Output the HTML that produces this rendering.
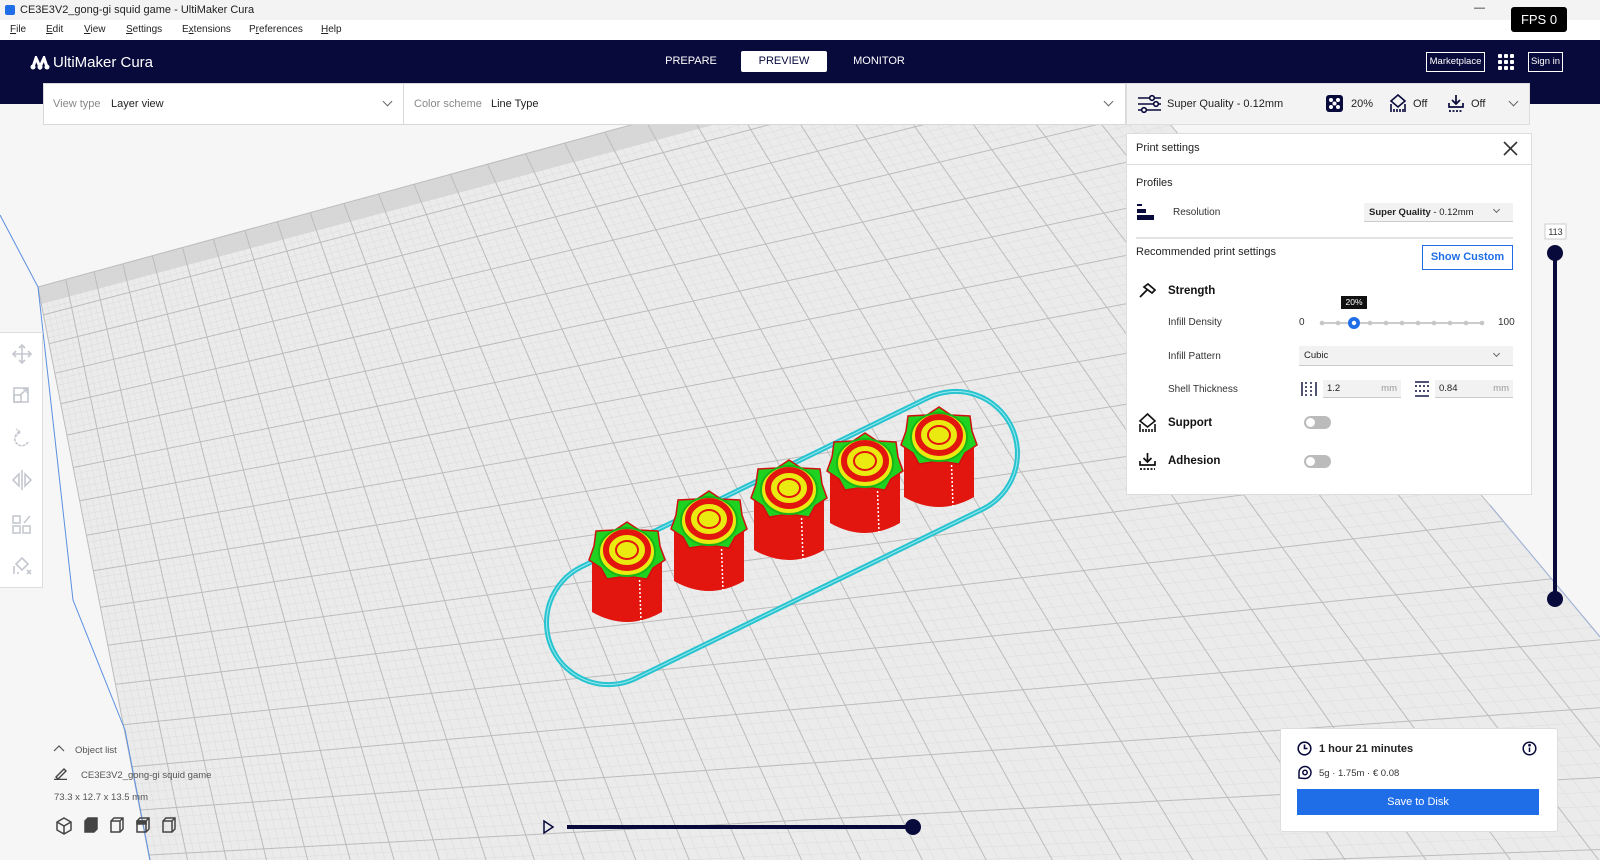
<!DOCTYPE html>
<html style="width:1600px;height:860px;overflow:hidden"><head><meta charset="utf-8"><style>
*{margin:0;padding:0;box-sizing:border-box}
html,body{overflow:hidden}
body{width:1600px;height:860px;overflow:hidden;background:#f6f6f6;font-family:"Liberation Sans",sans-serif;position:relative;color:#222}
.abs{position:absolute}
#title{left:0;top:0;width:1600px;height:20px;background:#f3f3f3;font-size:11px;line-height:20px}
#menu{left:0;top:20px;width:1600px;height:20px;background:#fff;font-size:10px;line-height:20px}
#menu span{position:absolute}
#nav{left:0;top:40px;width:1600px;height:64px;background:#080a3c}
.tab{position:absolute;top:51px;height:21px;font-size:11px;line-height:21px;color:#fff;text-align:center}
.box{background:#fff;border:1px solid #d8d8d8}
.lbl{color:#888;font-size:11px}
.dd{font-size:11px}
.chev{position:absolute;width:7px;height:7px;border-right:1.3px solid #666;border-bottom:1.3px solid #666;transform:rotate(45deg)}
.ps{font-size:10px;color:#333;position:absolute}
.bold{font-weight:bold;font-size:11.5px;color:#111;position:absolute}
.tog{position:absolute;width:27px;height:13px;border-radius:7px;background:#bbb}
.tog:after{content:"";position:absolute;left:2px;top:2px;width:9px;height:9px;border-radius:50%;background:#fff}
.inp{position:absolute;height:18px;background:#f2f2f2;border-bottom:1px solid #ccc;font-size:9.5px;line-height:18px;padding-left:4px}
.inp i{position:absolute;right:4px;color:#999;font-style:normal}
</style></head><body>
<svg id="scene" class="abs" style="left:0;top:0" width="1600" height="860">
<polygon id="plate" points="38,287 1070,5 1905,1000 177,1000" fill="#ebebeb"/>
<g id="grid"></g>
<polyline points="0,215 38,287 73,600 125,730 150,860" fill="none" stroke="#5b8fe0" stroke-width="1"/>
<line x1="1490" y1="505" x2="1600" y2="637" stroke="#9fb3da" stroke-width="1"/>
<g transform="translate(782,538) rotate(-26)">
<rect x="-255" y="-62" width="510" height="124" rx="62" fill="none" stroke="#27c3cf" stroke-width="5"/>
<rect x="-255" y="-62" width="510" height="124" rx="62" fill="none" stroke="#9ee9ef" stroke-width="1"/>
</g>
<defs>
<g id="knob">
<path d="M-35,0 L-35,60 Q0,80 35,60 L35,0 Z" fill="#e2150f"/>
<line x1="12" y1="12" x2="14" y2="70" stroke="#fff" stroke-width="1.5" stroke-dasharray="2 2"/>
<polygon points="0,-30 12,-22 31,-21 33,-6 38,8 26,16 20,27 0,24 -20,27 -26,16 -38,8 -33,-6 -31,-21 -12,-22" fill="#1fd21f" stroke="#d01010" stroke-width="1.5"/>
<ellipse cx="0" cy="0" rx="28" ry="24" fill="#eaea10" stroke="#17b517" stroke-width="2"/>
<ellipse cx="0" cy="-2" rx="21" ry="18" fill="none" stroke="#e2150f" stroke-width="6"/>
<ellipse cx="0" cy="-2" rx="11" ry="9" fill="#eaea10" stroke="#e2150f" stroke-width="2"/>
</g>
</defs>
<use href="#knob" x="627" y="552"/>
<use href="#knob" x="709" y="521"/>
<use href="#knob" x="789" y="490"/>
<use href="#knob" x="865" y="463"/>
<use href="#knob" x="939" y="437"/>
<line x1="1555" y1="253" x2="1555" y2="599" stroke="#080a3c" stroke-width="4"/>
<circle cx="1555" cy="253" r="8" fill="#080a3c"/>
<circle cx="1555" cy="599" r="8" fill="#080a3c"/>
<rect x="1545" y="224" width="21" height="15" fill="#fff" stroke="#ccc"/>
<text x="1555.5" y="235" font-size="9" text-anchor="middle" font-family="Liberation Sans" fill="#333">113</text>
<polygon points="544,821 553,827 544,833" fill="none" stroke="#080a3c" stroke-width="1.5"/>
<line x1="567" y1="827" x2="913" y2="827" stroke="#080a3c" stroke-width="4"/>
<circle cx="913" cy="827" r="8" fill="#080a3c"/>
</svg>
<script>
(function(){
var P=[[38,287],[1070,5],[1905,1000],[177,1000]];
var x0=P[0][0],y0=P[0][1],x1=P[1][0],y1=P[1][1],x2=P[2][0],y2=P[2][1],x3=P[3][0],y3=P[3][1];
var dx1=x1-x2,dx2=x3-x2,dy1=y1-y2,dy2=y3-y2,sx=x0-x1+x2-x3,sy=y0-y1+y2-y3,den=dx1*dy2-dx2*dy1;
var g=(sx*dy2-dx2*sy)/den,h=(dx1*sy-sx*dy1)/den;
var a=x1-x0+g*x1,b=x3-x0+h*x3,c=x0,d=y1-y0+g*y1,e=y3-y0+h*y3,f=y0;
function m(u,v){var w=g*u+h*v+1;return [(a*u+b*v+c)/w,(d*u+e*v+f)/w];}
var s='',NU=27,NV=19;
function L(p,q,col,sw){s+='<line x1="'+p[0].toFixed(1)+'" y1="'+p[1].toFixed(1)+'" x2="'+q[0].toFixed(1)+'" y2="'+q[1].toFixed(1)+'" stroke="'+col+'" stroke-width="'+sw+'"/>';}
for(var i=0;i<=NU*5;i++){var u=i/(NU*5);if(i%5)L(m(u,0),m(u,1),'#dedede',0.6);}
for(var j=0;j<=NV*5;j++){var v=j/(NV*5);if(j%5)L(m(0,v),m(1,v),'#dedede',0.6);}
var q=[m(0,0),m(1,0),m(1,0.032),m(0,0.032)];
s+='<polygon points="'+q.map(function(p){return p.join(',')}).join(' ')+'" fill="#d3d3d3" opacity="0.85"/>';
for(i=0;i<=NU;i++){u=i/NU;L(m(u,0),m(u,1),'#bcbcbc',1);}
for(j=0;j<=NV;j++){v=j/NV;L(m(0,v),m(1,v),'#bcbcbc',1);}
document.getElementById('grid').innerHTML=s;
})();
</script>

<div id="title" class="abs"><span style="position:absolute;left:5px;top:5px;width:10px;height:10px;background:#1f6ee8;border-radius:2px"></span><span style="position:absolute;left:20px">CE3E3V2_gong-gi squid game - UltiMaker Cura</span><span style="position:absolute;left:1474px;top:-2px">—</span></div>
<div id="menu" class="abs"><span style="left:10px"><u>F</u>ile</span><span style="left:46px"><u>E</u>dit</span><span style="left:84px"><u>V</u>iew</span><span style="left:126px"><u>S</u>ettings</span><span style="left:182px">E<u>x</u>tensions</span><span style="left:249px">P<u>r</u>eferences</span><span style="left:321px"><u>H</u>elp</span></div>
<div id="nav" class="abs"></div>
<div class="abs" style="left:1511px;top:7px;width:56px;height:25px;background:#000;border-radius:3px;color:#fff;font-size:13px;line-height:25px;text-align:center;z-index:10">FPS 0</div>
<div class="abs" style="left:30px;top:54px;color:#fff;font-size:15px;display:flex;align-items:center"><svg width="20" height="14" style="margin-right:3px"><circle cx="3" cy="11" r="2.5" fill="#fff"/><circle cx="10" cy="11" r="2.5" fill="#fff"/><circle cx="17" cy="11" r="2.5" fill="#fff"/><path d="M3,11 L6,2 L10,11 L14,2 L17,11" stroke="#fff" stroke-width="3" fill="none"/></svg>UltiMaker Cura</div>
<div class="tab" style="left:660px;width:62px">PREPARE</div>
<div class="tab" style="left:741px;width:86px;background:#fff;color:#080a3c;border-radius:2px">PREVIEW</div>
<div class="tab" style="left:848px;width:62px">MONITOR</div>
<div class="abs" style="left:1426px;top:52px;width:59px;height:20px;border:1px solid #fff;color:#fff;font-size:9.5px;line-height:18px;text-align:center">Marketplace</div>
<svg class="abs" style="left:1497px;top:53px" width="18" height="18"><g fill="#fff"><rect x="1" y="1" width="4" height="4" rx="1"/><rect x="7" y="1" width="4" height="4" rx="1"/><rect x="13" y="1" width="4" height="4" rx="1"/><rect x="1" y="7" width="4" height="4" rx="1"/><rect x="7" y="7" width="4" height="4" rx="1"/><rect x="13" y="7" width="4" height="4" rx="1"/><rect x="1" y="13" width="4" height="4" rx="1"/><rect x="7" y="13" width="4" height="4" rx="1"/><rect x="13" y="13" width="4" height="4" rx="1"/></g></svg>
<div class="abs" style="left:1528px;top:52px;width:35px;height:20px;border:1px solid #fff;color:#fff;font-size:9.5px;line-height:18px;text-align:center">Sign in</div>

<div class="abs box" style="left:43px;top:83px;width:361px;height:42px"></div>
<div class="abs box" style="left:403px;top:83px;width:723px;height:42px"></div>
<span class="abs lbl" style="left:53px;top:98px">View type</span><span class="abs dd" style="left:111px;top:98px">Layer view</span>
<div class="chev" style="left:384px;top:98px"></div>
<span class="abs lbl" style="left:414px;top:98px">Color scheme</span><span class="abs dd" style="left:491px;top:98px">Line Type</span>
<div class="chev" style="left:1105px;top:98px"></div>
<div class="abs" style="left:1126px;top:83px;width:404px;height:42px;background:#f3f3f3;border:1px solid #ddd"></div>
<svg class="abs" style="left:1138px;top:95px" width="24" height="18" stroke="#080a3c" stroke-width="1.6" fill="#fff"><line x1="0" y1="3" x2="23" y2="3"/><line x1="0" y1="9" x2="23" y2="9"/><line x1="0" y1="15" x2="23" y2="15"/><circle cx="14" cy="3" r="2.3"/><circle cx="18" cy="9" r="2.3"/><circle cx="6" cy="15" r="2.3"/></svg>
<span class="abs" style="left:1167px;top:98px;font-size:11px">Super Quality - 0.12mm</span>
<svg class="abs" style="left:1326px;top:95px" width="17" height="17"><rect width="17" height="17" rx="3" fill="#080a3c"/><g fill="#fff"><circle cx="5" cy="5" r="2"/><circle cx="12" cy="5" r="2"/><circle cx="8.5" cy="8.5" r="2"/><circle cx="5" cy="12" r="2"/><circle cx="12" cy="12" r="2"/></g></svg>
<span class="abs" style="left:1351px;top:98px;font-size:11px">20%</span>
<svg class="abs" style="left:1389px;top:94px" width="18" height="19" fill="none" stroke="#080a3c" stroke-width="1.6"><path d="M9,1 L16,7 L9,13 L2,7 Z"/><path d="M2,10 V18 M5,15 V18 M8,15 V18 M11,15 V18 M14,15 V18 M16,10 V18"/></svg>
<span class="abs" style="left:1413px;top:98px;font-size:11px">Off</span>
<svg class="abs" style="left:1447px;top:94px" width="18" height="19" fill="none" stroke="#080a3c" stroke-width="1.7"><path d="M9,1 V10 M5,6 L9,10 L13,6 M2,9 V13 H16 V9"/><path d="M2,17 H16" stroke-dasharray="2 1.5"/></svg>
<span class="abs" style="left:1471px;top:98px;font-size:11px">Off</span>
<div class="chev" style="left:1510px;top:98px"></div>

<div class="abs" style="left:1126px;top:133px;width:406px;height:362px;background:#fff;border:1px solid #ddd"></div>
<div class="abs" style="left:1126px;top:164px;width:406px;height:1px;background:#ddd"></div>
<span class="abs" style="left:1136px;top:142px;font-size:11px">Print settings</span>
<svg class="abs" style="left:1503px;top:141px" width="15" height="15" stroke="#333" stroke-width="1.6"><line x1="1" y1="1" x2="14" y2="14"/><line x1="14" y1="1" x2="1" y2="14"/></svg>
<span class="abs" style="left:1136px;top:177px;font-size:11px">Profiles</span>
<svg class="abs" style="left:1137px;top:204px" width="18" height="16" fill="#080a3c"><rect x="0" y="0" width="5" height="2"/><rect x="0" y="5" width="9" height="4"/><rect x="0" y="11" width="17" height="5"/></svg>
<span class="ps" style="left:1173px;top:207px">Resolution</span>
<div class="abs" style="left:1364px;top:203px;width:149px;height:19px;background:#f2f2f2;border-bottom:1px solid #ccc;font-size:9.5px;line-height:19px;padding-left:5px"><b>Super Quality</b> - 0.12mm</div>
<div class="chev" style="left:1494px;top:207px;width:5px;height:5px"></div>
<div class="abs" style="left:1136px;top:237px;width:377px;height:2px;background:#e3e3e3"></div>
<span class="abs" style="left:1136px;top:246px;font-size:11px">Recommended print settings</span>
<div class="abs" style="left:1422px;top:245px;width:91px;height:25px;border:1px solid #1f6ee8;color:#1f6ee8;font-size:11px;line-height:23px;text-align:center;font-weight:bold">Show Custom</div>
<svg class="abs" style="left:1138px;top:283px" width="18" height="16" fill="none" stroke="#111" stroke-width="1.7"><path d="M2,14 L9,7 M6,4 L10,1 L17,7 L14,10 Z"/></svg>
<span class="bold" style="left:1168px;top:285px">Strength</span>
<span class="ps" style="left:1168px;top:317px">Infill Density</span>
<span class="ps" style="left:1299px;top:317px">0</span><span class="ps" style="left:1498px;top:317px">100</span>
<div class="abs" style="left:1322px;top:322px;width:160px;height:2px;background:#ccc"></div>
<svg class="abs" style="left:1318px;top:316px" width="170" height="14"><g fill="#c6c6c6"><circle cx="4" cy="7" r="2.3"/><circle cx="20" cy="7" r="2.3"/><circle cx="52" cy="7" r="2.3"/><circle cx="68" cy="7" r="2.3"/><circle cx="84" cy="7" r="2.3"/><circle cx="100" cy="7" r="2.3"/><circle cx="116" cy="7" r="2.3"/><circle cx="132" cy="7" r="2.3"/><circle cx="148" cy="7" r="2.3"/><circle cx="164" cy="7" r="2.3"/></g><circle cx="36" cy="7" r="6" fill="#1f6ee8"/><circle cx="36" cy="7" r="2.2" fill="#fff"/></svg>
<div class="abs" style="left:1341px;top:296px;width:26px;height:13px;background:#111;color:#fff;font-size:8.5px;line-height:13px;text-align:center">20%</div>
<span class="ps" style="left:1168px;top:351px">Infill Pattern</span>
<div class="abs" style="left:1299px;top:346px;width:214px;height:20px;background:#f2f2f2;border-bottom:1px solid #ccc;font-size:9.5px;line-height:20px;padding-left:5px">Cubic</div>
<div class="chev" style="left:1494px;top:351px;width:5px;height:5px"></div>
<span class="ps" style="left:1168px;top:384px">Shell Thickness</span>
<svg class="abs" style="left:1301px;top:381px" width="16" height="16" stroke="#080a3c" stroke-width="1.4"><line x1="1" y1="1" x2="1" y2="15"/><line x1="5" y1="1" x2="5" y2="15" stroke-dasharray="2 2"/><line x1="10" y1="1" x2="10" y2="15" stroke-dasharray="2 2"/><line x1="15" y1="1" x2="15" y2="15"/></svg>
<div class="inp" style="left:1323px;top:380px;width:78px">1.2<i>mm</i></div>
<svg class="abs" style="left:1414px;top:381px" width="16" height="16" stroke="#080a3c" stroke-width="1.4"><line x1="1" y1="1" x2="15" y2="1"/><line x1="1" y1="5" x2="15" y2="5" stroke-dasharray="2 2"/><line x1="1" y1="10" x2="15" y2="10" stroke-dasharray="2 2"/><line x1="1" y1="15" x2="15" y2="15"/></svg>
<div class="inp" style="left:1435px;top:380px;width:78px">0.84<i>mm</i></div>
<svg class="abs" style="left:1138px;top:413px" width="19" height="20" fill="none" stroke="#111" stroke-width="1.6"><path d="M9.5,1 L17,8 L9.5,14 L2,8 Z"/><path d="M2,11 V19 M5,16 V19 M8,16 V19 M11,16 V19 M14,16 V19 M17,11 V19"/></svg>
<span class="bold" style="left:1168px;top:417px">Support</span>
<div class="tog" style="left:1304px;top:416px"></div>
<svg class="abs" style="left:1138px;top:452px" width="19" height="19" fill="none" stroke="#111" stroke-width="1.7"><path d="M9.5,1 V10 M5.5,6 L9.5,10 L13.5,6 M2,9 V13 H17 V9"/><path d="M2,17 H17" stroke-dasharray="2 1.5"/></svg>
<span class="bold" style="left:1168px;top:455px">Adhesion</span>
<div class="tog" style="left:1304px;top:455px"></div>

<div class="abs" style="left:0;top:332px;width:43px;height:256px;background:#fff;border:1px solid #ddd;border-left:none"></div>
<svg class="abs" style="left:8px;top:340px" width="28" height="240" fill="none" stroke="#c5c8cf" stroke-width="1.6">
<path d="M14,5 V23 M5,14 H23 M11,8 L14,5 L17,8 M11,20 L14,23 L17,20 M8,11 L5,14 L8,17 M20,11 L23,14 L20,17"/>
<rect x="6" y="48" width="14" height="14"/><rect x="6" y="55" width="7" height="7"/><path d="M12,55 L19,49 M15,49 H19 V53"/>
<path d="M20,102 A7,7 0 1 1 12,92 M12,92 L8,89 M12,92 L8,96" stroke-dasharray="3 1"/>
<path d="M14,130 V150 M11,134 L5,140 L11,146 Z M17,134 L23,140 L17,146 Z"/>
<rect x="5" y="176" width="7" height="7"/><rect x="5" y="186" width="7" height="7"/><rect x="15" y="186" width="7" height="7"/><path d="M16,183 L22,176"/>
<path d="M14,218 L20,224 L14,230 L8,224 Z M6,226 V234 M10,232 V234 M19,230 L23,234 M23,230 L19,234"/>
</svg>

<svg class="abs" style="left:53px;top:745px" width="12" height="8" fill="none" stroke="#555" stroke-width="1.2"><path d="M1,6 L6,1 L11,6"/></svg>
<span class="abs" style="left:75px;top:745px;font-size:9.5px;color:#555">Object list</span>
<svg class="abs" style="left:54px;top:768px" width="14" height="12" fill="none" stroke="#444" stroke-width="1.4"><path d="M2,9 L10,1 L12,3 L4,11 Z M0,11.5 H13"/></svg>
<span class="abs" style="left:81px;top:770px;font-size:9.5px;color:#555">CE3E3V2_gong-gi squid game</span>
<span class="abs" style="left:54px;top:792px;font-size:9.5px;color:#555">73.3 x 12.7 x 13.5 mm</span>
<svg class="abs" style="left:55px;top:816px" width="125" height="20" fill="none" stroke="#444" stroke-width="1.5">
<path d="M9,2 L16,6 V14 L9,18 L2,14 V6 Z M2,6 L9,10 L16,6 M9,10 V18"/>
<path d="M30,5 L33,2 H42 V13 L39,16 H30 Z" fill="#444"/><path d="M30,5 H39 V16 M39,5 L42,2"/>
<path d="M56,5 L59,2 H68 V13 L65,16 H56 Z M56,5 H65 V16 M65,5 L68,2"/>
<path d="M82,5 L85,2 H94 V13 L91,16 H82 Z M82,5 H91 V16 M91,5 L94,2"/><path d="M82,5 H91 V8 H82 Z" fill="#444"/>
<path d="M108,5 L111,2 H120 V13 L117,16 H108 Z M108,5 H117 V16 M117,5 L120,2"/>
</svg>

<div class="abs" style="left:1280px;top:728px;width:278px;height:104px;background:#fff;border:1px solid #ddd;border-radius:3px"></div>
<svg class="abs" style="left:1297px;top:741px" width="15" height="15" fill="none" stroke="#080a3c" stroke-width="1.6"><circle cx="7.5" cy="7.5" r="6.3"/><path d="M7.5,3.5 V7.5 H10.5"/></svg>
<span class="abs" style="left:1319px;top:743px;font-size:11px;font-weight:bold">1 hour 21 minutes</span>
<svg class="abs" style="left:1522px;top:741px" width="15" height="15" fill="none" stroke="#080a3c" stroke-width="1.5"><circle cx="7.5" cy="7.5" r="6.3"/><path d="M7.5,6.5 V11"/><circle cx="7.5" cy="4.2" r="0.6" fill="#080a3c"/></svg>
<svg class="abs" style="left:1297px;top:765px" width="15" height="15" fill="none" stroke="#080a3c" stroke-width="1.5"><path d="M2,13 V7.5 A6,6 0 1 1 7.5,13.5 Z"/><circle cx="8" cy="7.5" r="2.2"/></svg>
<span class="abs" style="left:1319px;top:768px;font-size:9.5px;color:#333">5g · 1.75m · € 0.08</span>
<div class="abs" style="left:1297px;top:789px;width:242px;height:26px;background:#1f6ee8;color:#fff;font-size:11px;line-height:26px;text-align:center">Save to Disk</div>
</body></html>
